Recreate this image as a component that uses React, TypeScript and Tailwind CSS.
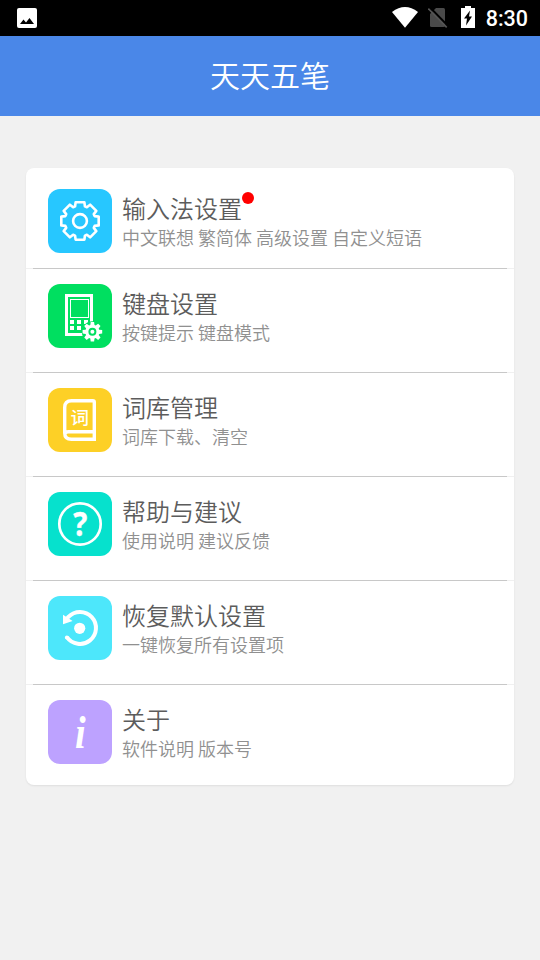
import React from 'react';

const gearPath = (cx: number, cy: number, outer: number, inner: number, tip: number, base: number) => {
  const points: string[] = [];
  for (let i = 0; i < 8; i++) {
    const a = (i * Math.PI) / 4;
    [
      [-base, -inner],
      [-tip, -outer],
      [tip, -outer],
      [base, -inner],
    ].forEach(([x, y]) => {
      const px = cx + x * Math.cos(a) - y * Math.sin(a);
      const py = cy + x * Math.sin(a) + y * Math.cos(a);
      points.push(`${px.toFixed(2)} ${py.toFixed(2)}`);
    });
  }
  return `M${points.join('L')}Z`;
};

const GearIcon = () => (
  <svg viewBox="0 0 64 64" className="size-16" fill="none" stroke="#fff" strokeLinejoin="round">
    <path d={gearPath(32, 32, 18.7, 14.6, 4.4, 4.9)} strokeWidth="2.6" />
    <circle cx="32" cy="32" r="6.9" strokeWidth="2.6" />
  </svg>
);

const KeyboardIcon = () => (
  <svg viewBox="0 0 64 64" className="size-16" fill="none">
    <rect x="18.5" y="11.5" width="25" height="39" stroke="#fff" strokeWidth="3" />
    <rect x="22.5" y="15.5" width="18" height="18" stroke="#fff" />
    {[36, 42].map((y) =>
      [22, 29, 36].map((x) => <rect key={`${x}-${y}`} x={x} y={y} width="4" height="4" fill="#fff" />)
    )}
    <circle cx="44.4" cy="47.8" r="10.6" fill="#00df60" />
    <path d={gearPath(44.4, 47.8, 9.8, 6.8, 1.7, 2.1)} fill="#fff" />
    <circle cx="44.4" cy="47.8" r="3" stroke="#00df60" strokeWidth="2" />
  </svg>
);

const DictIcon = () => (
  <svg viewBox="0 0 64 64" className="size-16" fill="none">
    <path
      d="M46.3 43.7V14.2Q46.3 12.7 44.8 12.7H23.5Q16.7 12.7 16.7 19.5V45Q16.7 51.3 23.5 51.3H46.3V43.7H20.5Q17.5 43.7 16.7 46"
      stroke="#fff"
      strokeWidth="3.4"
    />
    <text
      transform="translate(22.6 35.6) scale(1 .92)"
      fontSize="18.6"
      fontWeight="500"
      fill="#fff"
      fontFamily="'Noto Sans CJK SC', sans-serif"
    >
      词
    </text>
  </svg>
);

const HelpIcon = () => (
  <svg viewBox="0 0 64 64" className="size-16" fill="none">
    <circle cx="32" cy="32" r="20.7" stroke="#fff" strokeWidth="2.7" />
    <text
      transform="translate(32.2 44.4) scale(.88 1)"
      textAnchor="middle"
      fontSize="33.5"
      fontWeight="700"
      fill="#fff"
      stroke="#fff"
      strokeWidth=".4"
      fontFamily="'Open Sans', sans-serif"
    >
      ?
    </text>
  </svg>
);

const RestoreIcon = () => (
  <svg viewBox="0 0 64 64" className="size-16" fill="none">
    <path d="M18.9 41.2A16 16 0 1 0 20.4 20.9L18 24" stroke="#fff" strokeWidth="4" />
    <circle cx="18.9" cy="41.4" r="2" fill="#fff" />
    <path d="M15 18.8V28.2L24.6 25Z" fill="#fff" />
    <circle cx="31.7" cy="32.3" r="5.6" fill="#fff" />
  </svg>
);

const AboutIcon = () => (
  <svg viewBox="0 0 64 64" className="size-16">
    <text
      transform="translate(32.4 48.4) scale(.82 1)"
      textAnchor="middle"
      fontSize="47"
      fontWeight="700"
      fontStyle="italic"
      fill="#fff"
      fontFamily="'Liberation Serif', serif"
    >
      i
    </text>
  </svg>
);

const items = [
  { title: '输入法设置', desc: '中文联想 繁简体 高级设置 自定义短语', color: 'bg-[#27c7ff]', icon: GearIcon, badge: true },
  { title: '键盘设置', desc: '按键提示 键盘模式', color: 'bg-[#00df60]', icon: KeyboardIcon },
  { title: '词库管理', desc: '词库下载、清空', color: 'bg-[#fdd026]', icon: DictIcon },
  { title: '帮助与建议', desc: '使用说明 建议反馈', color: 'bg-[#06e1cd]', icon: HelpIcon },
  { title: '恢复默认设置', desc: '一键恢复所有设置项', color: 'bg-[#4de7fb]', icon: RestoreIcon },
  { title: '关于', desc: '软件说明 版本号', color: 'bg-[#bda2ff]', icon: AboutIcon },
];

const StatusBar = () => (
  <div className="flex h-9 items-center bg-black pl-[17px] pr-3 text-white">
    <svg viewBox="0 0 20 20" className="size-5">
      <rect width="20" height="20" rx="2" fill="#fff" />
      <path d="M3 16L6.5 11.5L9 14.5L12.5 10L17 16Z" fill="#000" />
    </svg>
    <svg viewBox="0 0 26 21" className="mb-px ml-auto h-[21px] w-[26px]">
      <path d="M0 4.9Q13-4.8 26 4.9L13 20.7Z" fill="#fff" />
    </svg>
    <svg viewBox="0 0 20 22" className="mb-0.5 ml-2.5 h-[22px] w-5">
      <path d="M8 2H15.5Q17 2 17 3.5V19.5Q17 21 15.5 21H3.5Q2 21 2 19.5V8Z" fill="#4a4a4a" />
      <path d="M1.8 1.2L20.5 20.5" stroke="#000" strokeWidth="2" />
      <path d="M.3 2.6L18.7 21.4" stroke="#555" strokeWidth="1.6" />
    </svg>
    <svg viewBox="0 0 14 22" className="mb-0.5 ml-[13px] h-[22px] w-3.5">
      <path d="M0 2H4V0H10V2H14V22H0Z" fill="#fff" />
      <path d="M9 4.5L3 12.5H6L5 19.5L11 10.5H8Z" fill="#000" />
    </svg>
    <span className="ml-[11px] mt-0.5 font-[Roboto] text-[21.5px] font-medium leading-9">8:30</span>
  </div>
);

export default function App() {
  return (
    <div className="h-[960px] w-[540px] overflow-hidden bg-[#f1f1f1] font-['Noto_Sans_CJK_SC',sans-serif] font-[350]">
      <StatusBar />
      <header className="flex h-20 items-center justify-center bg-[#4a87e8] pb-[3px] text-[30px] text-white">
        <h1 className="font-[350]">天天五笔</h1>
      </header>
      <ul className="mx-[26px] mt-[52px] h-[617px] rounded-lg bg-white shadow-[0_1px_2px_rgba(0,0,0,0.08)]">
        {items.map(({ title, desc, color, icon: Icon, badge }, index) => (
          <li key={title}>
            {index > 0 && (
              <div className="h-px bg-[#f0f0f0] px-[7px]">
                <div className="h-px bg-[#c8c8c8]" />
              </div>
            )}
            <div className={`flex items-start pl-[22px] ${index === 0 ? 'h-[100px] pt-[21px]' : 'h-[103px] pt-[15px]'}`}>
              <div className={`size-16 shrink-0 rounded-xl ${color}`}>
                <Icon />
              </div>
              <div className="ml-2.5 pt-0.5">
                <div className="flex items-start">
                  <h2 className="text-2xl font-[350] leading-[34px] text-[#5c5c5c]">{title}</h2>
                  {badge && <span className="mt-px size-3 rounded-full bg-[#ff0000]" />}
                </div>
                <p className="text-lg leading-6 text-[#909090]">{desc}</p>
              </div>
            </div>
          </li>
        ))}
      </ul>
    </div>
  );
}
